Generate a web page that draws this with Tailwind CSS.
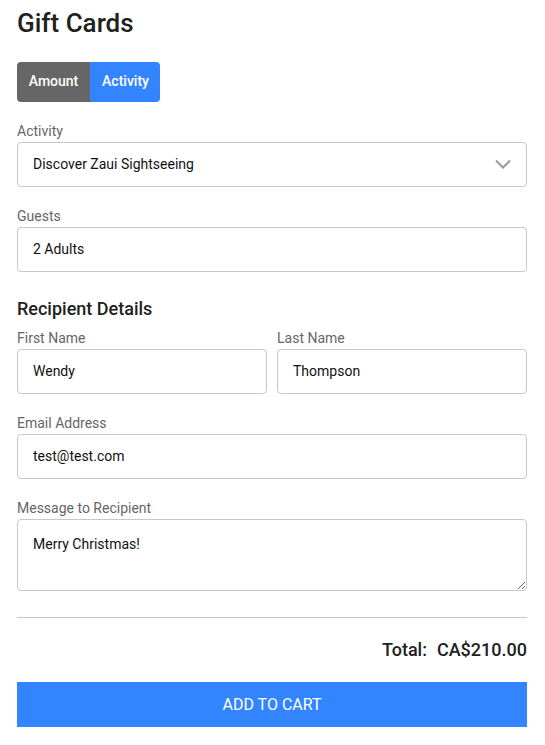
<!DOCTYPE html>
<html lang="en">
<head>
    <meta charset="UTF-8">
    <meta name="viewport" content="width=device-width, initial-scale=1.0">
    <title>Gift Cards</title>
    <script src="https://cdn.jsdelivr.net/npm/@tailwindcss/browser@4"></script>
</head>
<body class="bg-white font-['Roboto',sans-serif] text-sm text-[#666]">

    <form class="w-[545px] h-[745px] pl-[17px] pr-[18px] pt-1 overflow-hidden">
        <h1 class="text-[26px] leading-[38px] font-medium text-[#212121]">Gift Cards</h1>

        <!-- Gift card type -->
        <div class="mt-5 flex h-10 w-[143px] rounded overflow-hidden font-medium text-white">
            <button type="button" class="w-[73px] pb-0.5 bg-[#666]">Amount</button>
            <button type="button" class="w-[70px] pb-0.5 pl-px bg-[#3385ff]">Activity</button>
        </div>

        <div class="mt-5">
            <label class="block h-5 leading-[18px]" for="activity">Activity</label>
            <div class="relative">
                <select id="activity" class="block w-full h-[45px] px-[15px] pb-0.5 border border-[#c8c8c8] rounded appearance-none bg-white text-[#111]">
                    <option>Discover Zaui Sightseeing</option>
                </select>
                <svg class="absolute right-4 top-[17px] w-4 h-[11px]" viewBox="0 0 16 11" fill="none" stroke="#999" stroke-width="2">
                    <path d="M1 1.5 8 8.5 15 1.5"/>
                </svg>
            </div>
        </div>

        <div class="mt-5">
            <label class="block h-5 leading-[18px]" for="guests">Guests</label>
            <input id="guests" type="text" value="2 Adults" class="block w-full h-[45px] px-[15px] pb-0.5 border border-[#c8c8c8] rounded text-[#111]">
        </div>

        <!-- Recipient -->
        <h2 class="mt-[27px] mb-2.5 text-lg leading-5 font-medium text-[#212121]">Recipient Details</h2>
        <div class="flex gap-2.5">
            <div class="flex-1">
                <label class="block h-5 leading-[18px]" for="first">First Name</label>
                <input id="first" type="text" value="Wendy" class="block w-full h-[45px] px-[15px] pb-0.5 border border-[#c8c8c8] rounded text-[#111]">
            </div>
            <div class="flex-1">
                <label class="block h-5 leading-[18px]" for="last">Last Name</label>
                <input id="last" type="text" value="Thompson" class="block w-full h-[45px] px-[15px] pb-0.5 border border-[#c8c8c8] rounded text-[#111]">
            </div>
        </div>

        <div class="mt-5">
            <label class="block h-5 leading-[18px]" for="email">Email Address</label>
            <input id="email" type="email" value="test@test.com" class="block w-full h-[45px] px-[15px] pb-0.5 border border-[#c8c8c8] rounded text-[#111]">
        </div>

        <div class="mt-5">
            <label class="block h-5 leading-[18px]" for="message">Message to Recipient</label>
            <textarea id="message" class="block w-full h-[72px] px-[15px] py-[14px] border border-[#c8c8c8] rounded resize-y leading-5 text-[#111]">Merry Christmas!</textarea>
        </div>

        <!-- Total -->
        <div class="mt-[26px] pt-5 flex justify-end gap-2.5 border-t border-[#c8c8c8] text-lg leading-6 font-medium text-[#212121]">
            <span>Total:</span>
            <span>CA$210.00</span>
        </div>

        <button type="button" class="mt-5 block w-full h-[45px] bg-[#3385ff] text-base text-white">ADD TO CART</button>
    </form>

</body>
</html>
